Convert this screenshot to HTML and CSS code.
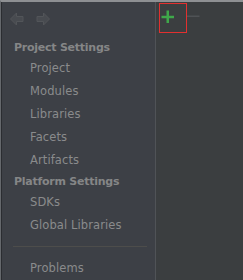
FILE: index.html
```html
<!DOCTYPE html>
<html>
<head>
    <title>Project Structure</title>
    <link rel="stylesheet" href="styles.css">
</head>
<body>
    <div class="window">
        <aside class="sidebar">
            <div class="nav-bar">
                <svg class="nav-arrow" width="14" height="14" viewBox="0 0 14 14">
                    <path d="M0.5 7 L6.5 1 L6.5 4.5 L13 4.5 L13 9.5 L6.5 9.5 L6.5 13 Z" />
                </svg>
                <svg class="nav-arrow" width="14" height="14" viewBox="0 0 14 14">
                    <path d="M13.5 7 L7.5 1 L7.5 4.5 L1 4.5 L1 9.5 L7.5 9.5 L7.5 13 Z" />
                </svg>
            </div>

            <div class="group-title">Project Settings</div>
            <ul class="items">
                <li>Project</li>
                <li>Modules</li>
                <li>Libraries</li>
                <li>Facets</li>
                <li>Artifacts</li>
            </ul>

            <div class="group-title">Platform Settings</div>
            <ul class="items">
                <li>SDKs</li>
                <li>Global Libraries</li>
            </ul>

            <div class="divider"></div>

            <ul class="items">
                <li>Problems</li>
            </ul>
        </aside>

        <main class="content">
            <div class="toolbar">
                <button class="tool" title="Add">
                    <svg width="16" height="16" viewBox="0 0 16 16">
                        <rect class="add-icon" x="1.5" y="6.75" width="12.5" height="2.5" />
                        <rect class="add-icon" x="6.5" y="1.5" width="2.5" height="12.5" />
                    </svg>
                </button>
                <button class="tool" title="Remove">
                    <svg width="16" height="16" viewBox="0 0 16 16">
                        <rect class="remove-icon" x="2" y="6.5" width="12.5" height="1.5" />
                    </svg>
                </button>
            </div>
            <div class="highlight"></div>
        </main>
    </div>
</body>
</html>
```

FILE: styles.css
```css
html, body {
    margin: 0;
    height: 100%;
}

body {
    background-color: #3b3e40;
    font-family: "DejaVu Sans", Verdana, sans-serif;
}

.window {
    display: flex;
    height: 100%;
    box-sizing: border-box;
    border-top: 2px solid #8e9093;
    border-left: 1px solid #65686c;
}

/* left tree with the settings groups */
.sidebar {
    width: 155px;
    flex-shrink: 0;
    box-sizing: border-box;
    background-color: #3d4046;
    border-left: 1px solid #2b2d31;
    border-right: 1px solid #505357;
}

.nav-bar {
    display: flex;
    gap: 12px;
    height: 36px;
    box-sizing: border-box;
    padding: 10px 0 0 8px;
}

.nav-arrow path {
    fill: #484b50;
    stroke: #525559;
    stroke-width: 1;
}

.group-title {
    height: 19px;
    line-height: 19px;
    padding-left: 12px;
    font-size: 11px;
    font-weight: bold;
    letter-spacing: -0.25px;
    color: #858687;
    white-space: nowrap;
}

.items {
    list-style: none;
    margin: 0;
    padding: 0;
}

.items li {
    height: 23px;
    line-height: 23px;
    padding-left: 28px;
    font-size: 11.5px;
    letter-spacing: 0.1px;
    color: #8a8b8c;
    white-space: nowrap;
}

.divider {
    height: 1px;
    margin: 9px 8px 10px 11px;
    background-color: #4d4d4b;
}

/* right panel */
.content {
    flex: 1;
    position: relative;
    background-color: #3b3e40;
}

.toolbar {
    display: flex;
    gap: 3px;
    padding: 4px 0 0 1px;
}

.tool {
    width: 22px;
    height: 22px;
    padding: 3px;
    border: none;
    background: none;
}

.tool svg {
    display: block;
}

.add-icon {
    fill: #3fa84a;
}

.remove-icon {
    fill: #4f5255;
}

.highlight {
    position: absolute;
    left: 3px;
    top: 1px;
    width: 28px;
    height: 30px;
    box-sizing: border-box;
    border: 1px solid #e2302f;
}
```
